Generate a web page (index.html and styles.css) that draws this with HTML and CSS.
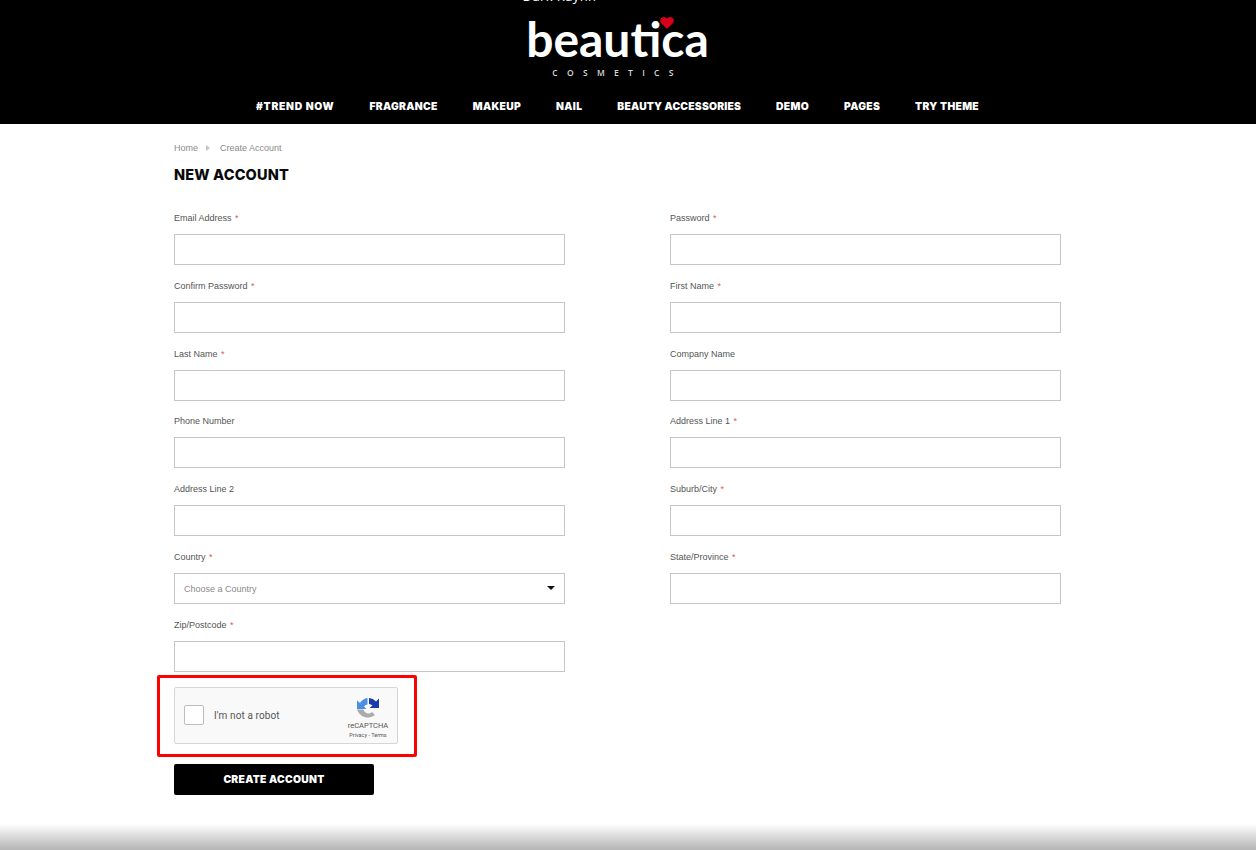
FILE: index.html
```html
<!DOCTYPE html>
<html lang="en">
<head>
<meta charset="utf-8">
<title>New Account</title>
<link rel="stylesheet" href="styles.css">
</head>
<body>
<header class="header">
  <div class="topline">Dark Rayhn</div>
  <div class="logo">
    <div class="logo-word">beaut<span class="logo-i">i<svg class="heart" viewBox="0 0 14 12" width="14" height="12"><path d="M7 12 1 6C-1 3 1 0 4 0c1.300 0 2.400.7 3 1.800C7.600.7 8.700 0 10 0c3 0 5 3 3 6z" fill="#d80018"/></svg></span>ca</div>
    <div class="logo-sub">COSMETICS</div>
  </div>
  <nav class="nav">
    <a class="nav-wide">#TREND NOW</a><a>FRAGRANCE</a><a>MAKEUP</a><a>NAIL</a><a class="nav-tight">BEAUTY ACCESSORIES</a><a>DEMO</a><a>PAGES</a><a>TRY THEME</a>
  </nav>
</header>
<main class="page">
  <div class="crumbs"><span>Home</span><i class="crumb-arrow"></i><span>Create Account</span></div>
  <h1 class="title">NEW ACCOUNT</h1>
  <form class="form">
    <div class="field"><label>Email Address <b>*</b></label><div class="input"></div></div>
    <div class="field"><label>Password <b>*</b></label><div class="input"></div></div>
    <div class="field"><label>Confirm Password <b>*</b></label><div class="input"></div></div>
    <div class="field"><label>First Name <b>*</b></label><div class="input"></div></div>
    <div class="field"><label>Last Name <b>*</b></label><div class="input"></div></div>
    <div class="field"><label>Company Name</label><div class="input"></div></div>
    <div class="field"><label>Phone Number</label><div class="input"></div></div>
    <div class="field"><label>Address Line 1 <b>*</b></label><div class="input"></div></div>
    <div class="field"><label>Address Line 2</label><div class="input"></div></div>
    <div class="field"><label>Suburb/City <b>*</b></label><div class="input"></div></div>
    <div class="field"><label>Country <b>*</b></label><div class="input select"><span>Choose a Country</span><i class="caret"></i></div></div>
    <div class="field"><label>State/Province <b>*</b></label><div class="input"></div></div>
    <div class="field"><label>Zip/Postcode <b>*</b></label><div class="input"></div></div>
  </form>
  <div class="captcha">
    <div class="captcha-frame"></div>
    <span class="check"></span>
    <span class="robot">I'm not a robot</span>
    <div class="brand">
      <svg class="recaptcha" viewBox="0 0 24 24" width="24" height="24">
        <path d="M1 12V3.500L4 6A11 11 0 0 1 11.500 1V7.500A5 5 0 0 0 8 9.500L10.500 12z" fill="#4a90e2"/>
        <path d="M13 1A11 11 0 0 1 20 4.500L23 1.500V11H13.500L16.500 8.500A6 6 0 0 0 13 7z" fill="#1c3aa9"/>
        <path d="M1 12.500H7.500A5 5 0 0 0 16 15L19 18A11.500 11.500 0 0 1 1 12.500z" fill="#ababab"/>
      </svg>
      <span class="brand-name">reCAPTCHA</span>
      <span class="brand-links">Privacy - Terms</span>
    </div>
  </div>
  <button class="submit" type="button">CREATE ACCOUNT</button>
</main>
<div class="shade"></div>
</body>
</html>
```

FILE: styles.css
```css
* { box-sizing: border-box; }
html, body { margin: 0; padding: 0; }
body {
  width: 1256px;
  height: 850px;
  overflow: hidden;
  background: #fff;
  font-family: "Liberation Sans", Arial, sans-serif;
  position: relative;
}
.header {
  height: 124px;
  padding-right: 21px;
  background: #000;
  color: #fff;
  overflow: hidden;
  display: flex;
  flex-direction: column;
  align-items: center;
}
.topline {
  height: 18px;
  margin-top: -13px;
  margin-right: 116px;
  font: 13px/18px "Open Sans", sans-serif;
  letter-spacing: .4px;
}
.logo {
  display: flex;
  flex-direction: column;
  align-items: center;
}
.logo-word {
  font: 700 48px/50px "Lato", sans-serif;
  height: 50px;
  margin-top: 9px;
  white-space: nowrap;
}
.logo-i { position: relative; }
.heart { position: absolute; left: -1px; top: 7px; }
.logo-sub {
  font: 600 8.500px/12px "Open Sans", sans-serif;
  letter-spacing: 9.300px;
  color: #d8d8d8;
  margin-top: 3px;
}
.nav {
  display: flex;
  gap: 35px;
  margin-top: 20px;
  font: 900 10.300px/14px "Inter", sans-serif;
  letter-spacing: .33px;
  white-space: nowrap;
}
.nav-wide { letter-spacing: .73px; }
.nav-tight { letter-spacing: .22px; }
.page {
  width: 887px;
  margin-left: 174px;
  padding-top: 18px;
}
.crumbs {
  display: flex;
  align-items: center;
  font-size: 9px;
  line-height: 12px;
  color: #8a8a8a;
}
.crumb-arrow {
  width: 0;
  height: 0;
  margin: 0 10px 0 8px;
  border-left: 4px solid #c4c4c4;
  border-top: 3px solid transparent;
  border-bottom: 3px solid transparent;
}
.title {
  margin: 11px 0 0;
  font: 800 14.500px/20px "Inter", sans-serif;
  letter-spacing: .15px;
  color: #0a0a0a;
}
.form {
  display: grid;
  grid-template-columns: 391px 391px;
  column-gap: 105px;
  row-gap: 14.830px;
  margin-top: 27px;
}
.field label {
  display: block;
  height: 16px;
  font-size: 9px;
  line-height: 12px;
  color: #555;
  margin-bottom: 6px;
}
.field label b { color: #e25555; font-weight: 400; margin-left: 1px; }
.input {
  height: 31px;
  border: 1px solid #c6c6c6;
  background: #fff;
}
.select {
  display: flex;
  align-items: center;
  justify-content: space-between;
  padding: 0 9px;
  font-size: 9px;
  color: #8b8b8b;
}
.caret {
  width: 0;
  height: 0;
  border-left: 4px solid transparent;
  border-right: 4px solid transparent;
  border-top: 4px solid #111;
  margin-top: -2px;
}
.captcha {
  position: relative;
  width: 224px;
  height: 57px;
  margin-top: 15px;
  background: #f9f9f9;
  border: 1px solid #d6d6d6;
  border-radius: 2px;
  display: flex;
  align-items: center;
  padding-left: 9px;
}
.captcha-frame {
  position: absolute;
  left: -18px;
  top: -13px;
  width: 260px;
  height: 82px;
  border: 3px solid #f00;
  border-radius: 2px;
  pointer-events: none;
}
.check {
  width: 20px;
  height: 20px;
  background: #fff;
  border: 1px solid #bdbdbd;
  border-radius: 2px;
}
.robot {
  margin-left: 10px;
  margin-top: 2px;
  font: 10px/14px "Roboto", sans-serif;
  letter-spacing: .1px;
  color: #555;
}
.brand {
  position: absolute;
  right: 7px;
  top: 9px;
  width: 44px;
  display: flex;
  flex-direction: column;
  align-items: center;
  font-family: "Roboto", sans-serif;
  color: #555;
}
.recaptcha { display: block; }
.brand-name { font-size: 7.500px; line-height: 10px; }
.brand-links { font-size: 5.500px; line-height: 8px; white-space: nowrap; }
.submit {
  display: block;
  width: 200px;
  height: 31px;
  margin-top: 20px;
  border: 0;
  border-radius: 2px;
  background: #000;
  color: #fff;
  font: 900 10.300px/14px "Inter", sans-serif;
  letter-spacing: .3px;
}
.shade {
  position: absolute;
  left: 0;
  right: 0;
  bottom: 0;
  height: 26px;
  background: linear-gradient(#fff, #b4b4b4);
}
```
